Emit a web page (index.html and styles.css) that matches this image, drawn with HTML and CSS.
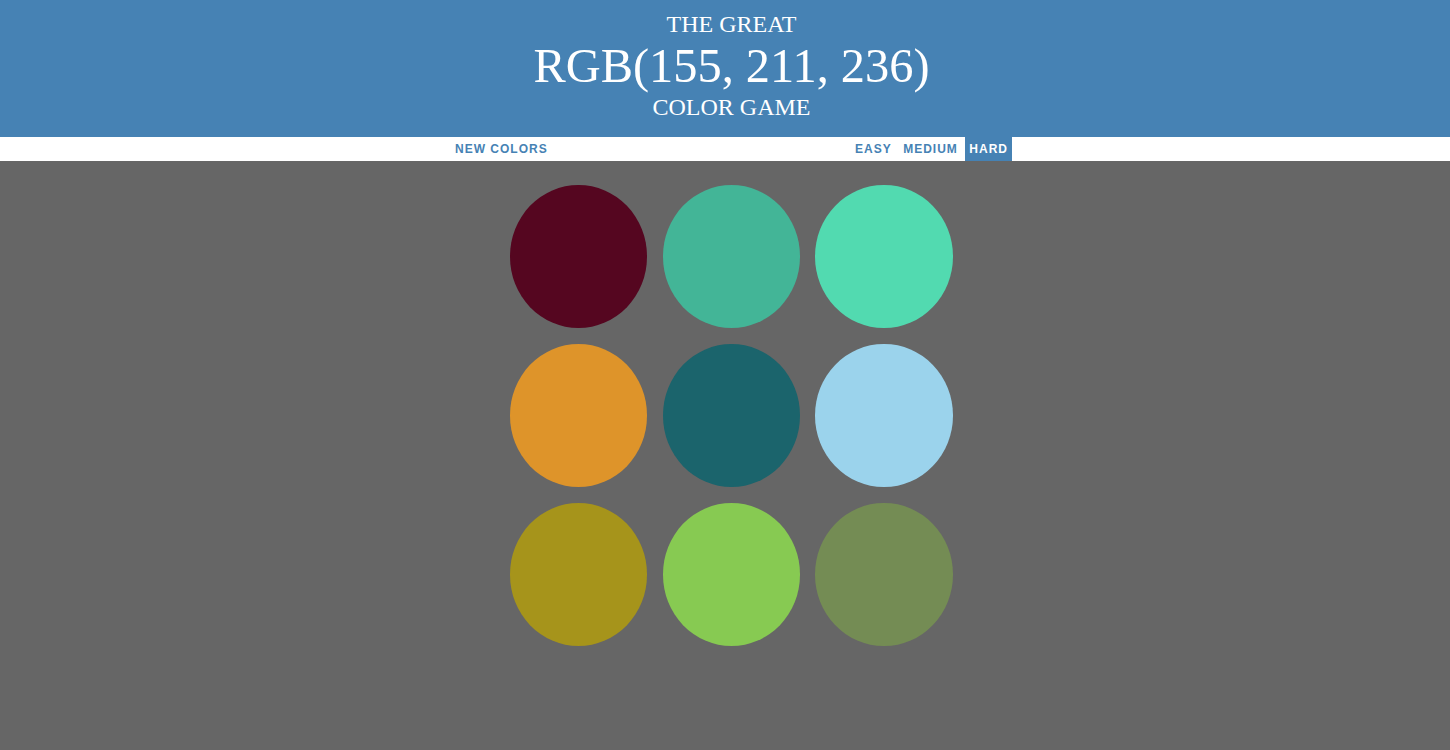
FILE: index.html
```html
<!DOCTYPE html>
<html lang="en">
<head>
<meta charset="utf-8">
<title>Color Game</title>
<link rel="stylesheet" href="styles.css">
</head>
<body>
<header class="header">
  <div class="title-small">The Great</div>
  <div class="title-rgb">RGB(155, 211, 236)</div>
  <div class="title-small title-bottom">Color Game</div>
</header>
<nav class="stripe">
  <div class="stripe-inner">
    <button class="btn">New Colors</button>
    <div class="modes">
      <button class="btn">Easy</button><button class="btn">Medium</button><button class="btn selected">Hard</button>
    </div>
  </div>
</nav>
<main class="board">
  <div class="square c1"></div>
  <div class="square c2"></div>
  <div class="square c3"></div>
  <div class="square c4"></div>
  <div class="square c5"></div>
  <div class="square c6"></div>
  <div class="square c7"></div>
  <div class="square c8"></div>
  <div class="square c9"></div>
</main>
</body>
</html>
```
FILE: styles.css
```css
html, body {
  margin: 0;
  padding: 0;
}
body {
  background: #666666;
  height: 750px;
  overflow: hidden;
}
.header {
  background: #4682b4;
  color: #ffffff;
  text-align: center;
  font-family: "Liberation Serif", "Times New Roman", serif;
  text-transform: uppercase;
  height: 137px;
  box-sizing: border-box;
  padding-top: 10px;
  padding-left: 13px;
}
.title-small {
  font-size: 24px;
  line-height: 28px;
}
.title-rgb {
  font-size: 48.4px;
  line-height: 56px;
}
.title-bottom {
  line-height: 26px;
}
.stripe {
  background: #ffffff;
  height: 24px;
}
.stripe-inner {
  width: 561px;
  margin-left: calc(50% - 274px);
  height: 24px;
  display: flex;
  justify-content: space-between;
}
.modes {
  display: flex;
  gap: 3.5px;
}
.btn {
  border: none;
  background: none;
  font-family: "Liberation Sans", Arial, sans-serif;
  font-weight: 700;
  font-size: 12px;
  letter-spacing: 1px;
  text-transform: uppercase;
  color: #4682b4;
  height: 24px;
  line-height: 24px;
  padding: 0 4px;
  margin: 0;
}
.btn.selected {
  background: #4682b4;
  color: #ffffff;
}
.board {
  width: 443px;
  margin-top: 24px;
  margin-left: calc(50% - 215px);
  display: grid;
  grid-template-columns: repeat(3, 137.3px);
  grid-auto-rows: 142.7px;
  column-gap: 15.4px;
  row-gap: 16.3px;
}
.square {
  border-radius: 50%;
}
.c1 { background: #550620; }
.c2 { background: #43b597; }
.c3 { background: #52dab0; }
.c4 { background: #de942a; }
.c5 { background: #1b646c; }
.c6 { background: #9bd3ec; }
.c7 { background: #a6941b; }
.c8 { background: #87ca52; }
.c9 { background: #748c54; }
```
